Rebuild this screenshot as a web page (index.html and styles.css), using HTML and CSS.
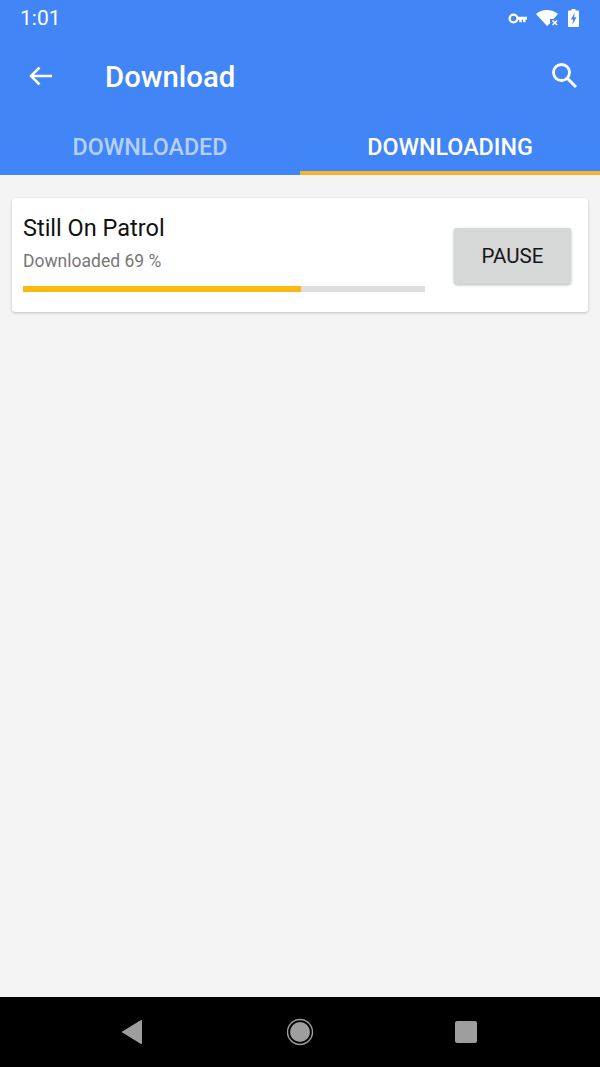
FILE: index.html
```html
<!doctype html>
<html lang="en">
  <head>
    <meta charset="UTF-8" />
    <meta name="viewport" content="width=device-width, initial-scale=1.0" />
    <title>Download</title>
    <link rel="stylesheet" href="styles.css">
  </head>
  <body>
    <header class="app-header">
      <div class="status-bar">
        <span class="clock">1:01</span>
        <div class="status-icons">
          <svg width="19" height="11" viewBox="0 0 19 11">
            <circle cx="5.500" cy="5.500" r="3.900" fill="none" stroke="#fff" stroke-width="2.200" />
            <path d="M9 3.800h10v3h-1.500v2.500h-2.500v-2.500h-1.200v2.500h-2.500v-2.500H9z" fill="#fff" />
          </svg>
          <svg width="23" height="16" viewBox="0 0 23 16">
            <path d="M0 4C3 1.500 6.800 0 11 0s8 1.500 11 4l-4.500 5h-3.500v4.500L11 16z" fill="#fff" />
            <path d="M16.500 10.500l4.500 4.500m0-4.500l-4.500 4.500" stroke="#fff" stroke-width="1.700" />
          </svg>
          <svg width="11" height="18" viewBox="0 0 11 18">
            <path d="M3.500 0h4v1.500h2.500a1 1 0 0 1 1 1V17a1 1 0 0 1-1 1H1a1 1 0 0 1-1-1V2.500a1 1 0 0 1 1-1h2.500z" fill="#fff" />
            <path d="M6.800 3.500L2.800 10.500h2.400L4.500 15.500 8.500 8.200H6z" fill="#4285f7" />
          </svg>
        </div>
      </div>
      <div class="toolbar">
        <svg class="back-icon" width="26" height="24" viewBox="0 0 26 24">
          <path d="M25 12H4M12.500 3.500L4 12l8.500 8.500" fill="none" stroke="#fff" stroke-width="2.500" />
        </svg>
        <h1 class="title">Download</h1>
        <svg class="search-icon" width="28" height="28" viewBox="0 0 28 28">
          <circle cx="11.500" cy="11.500" r="8" fill="none" stroke="#fff" stroke-width="2.800" />
          <path d="M17 17l9 9" stroke="#fff" stroke-width="3" />
        </svg>
      </div>
      <nav class="tabs">
        <div class="tab">DOWNLOADED</div>
        <div class="tab tab-active">DOWNLOADING</div>
      </nav>
    </header>

    <main class="content">
      <div class="card">
        <div class="card-info">
          <div class="song-title">Still On Patrol</div>
          <div class="song-status">Downloaded 69 %</div>
          <div class="progress"><div class="progress-fill" style="width: 69.1%"></div></div>
        </div>
        <button class="pause-btn">PAUSE</button>
      </div>
    </main>

    <footer class="nav-bar">
      <svg width="24" height="26" viewBox="0 0 24 26">
        <path d="M22 1.500v23a.6 .6 0 0 1-1 .4L1.500 13 21 1.100a.6 .6 0 0 1 1 .4z" fill="#9e9e9e" />
      </svg>
      <svg class="home-icon" width="28" height="28" viewBox="0 0 28 28">
        <circle cx="14" cy="14" r="12.500" fill="none" stroke="#9e9e9e" stroke-width="1.400" />
        <circle cx="14" cy="14" r="10" fill="#9e9e9e" />
      </svg>
      <svg width="24" height="24" viewBox="0 0 24 24">
        <rect x="1" y="1" width="22" height="22" rx="2" fill="#9e9e9e" />
      </svg>
    </footer>
  </body>
</html>
```

FILE: styles.css
```css
* {
  box-sizing: border-box;
}
html,
body {
  height: 100%;
}
body {
  margin: 0;
  display: flex;
  flex-direction: column;
  font-family: Roboto, "Liberation Sans", sans-serif;
  background-color: #f4f4f4;
}
.app-header {
  background-color: #4285f7;
  color: #fff;
}
.status-bar {
  height: 36px;
  display: flex;
  align-items: center;
  justify-content: space-between;
  padding: 0 21px 0 20px;
}
.clock {
  font-size: 21px;
  font-weight: 400;
}
.status-icons {
  display: flex;
  align-items: center;
  gap: 9px;
}
.toolbar {
  height: 80px;
  display: flex;
  align-items: center;
  padding: 2px 22px 0 27px;
}
.back-icon {
  margin-right: 52px;
  margin-bottom: 2px;
}
.title {
  flex-grow: 1;
  margin: 0;
  font-size: 29.300px;
  font-weight: 500;
}
.search-icon {
  margin-bottom: 4px;
}
.tabs {
  display: flex;
  height: 59px;
}
.tab {
  flex: 1;
  display: flex;
  align-items: center;
  justify-content: center;
  padding-top: 2px;
  font-size: 23.300px;
  font-weight: 500;
  color: #b4d0fb;
}
.tab-active {
  color: #fff;
  border-bottom: 4px solid #f9b333;
  padding-top: 6px;
}
.content {
  flex-grow: 1;
  padding: 23px 12px 0 12px;
}
.card {
  height: 114px;
  display: flex;
  align-items: center;
  justify-content: space-between;
  padding: 0 17px 0 11px;
  background-color: #fff;
  border-radius: 3px;
  box-shadow: 0 1px 3px rgba(0, 0, 0, 0.22);
}
.card-info {
  width: 402px;
  margin-top: -5px;
}
.song-title {
  font-size: 23.500px;
  color: #111;
  line-height: 30px;
}
.song-status {
  margin-top: 6px;
  font-size: 17.500px;
  color: #777;
  line-height: 24px;
}
.progress {
  margin-top: 13px;
  height: 6px;
  background-color: #dedede;
}
.progress-fill {
  height: 100%;
  background-color: #fdb90f;
}
.pause-btn {
  width: 117px;
  height: 56px;
  margin-top: 2px;
  padding: 0;
  border: 0;
  border-radius: 3px;
  background-color: #d6d7d7;
  box-shadow: 0 1px 3px rgba(0, 0, 0, 0.3);
  font-family: inherit;
  font-size: 20.500px;
  font-weight: 400;
  color: #151515;
}
.nav-bar {
  height: 70px;
  flex-shrink: 0;
  display: flex;
  align-items: center;
  justify-content: space-between;
  padding: 0 122px 0 120px;
  background-color: #000;
}
.home-icon {
  margin-left: 1px;
}
```
